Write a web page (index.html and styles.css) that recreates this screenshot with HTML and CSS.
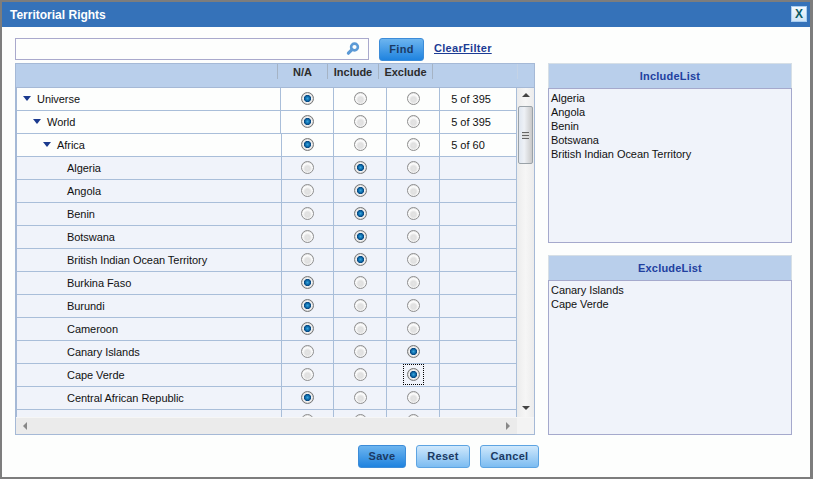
FILE: index.html
```html
<!DOCTYPE html>
<html lang="en">
    <head>
        <meta charset="utf-8" />
        <title>Territorial Rights</title>
        <link rel="stylesheet" href="styles.css">
    </head>
    <body>
        <div class="dialog">
            <div class="titlebar">
                <span class="title">Territorial Rights</span>
                <button class="close">X</button>
            </div>

            <div class="content">
                <div class="left">
                    <div class="search-row">
                        <div class="search-box">
                            <input type="text">
                            <svg width="14" height="14" viewBox="0 0 14 14">
                                <circle cx="8.5" cy="5" r="3.4" fill="none" stroke="#5b9ad6" stroke-width="2.6"/>
                                <path d="M6 7.6 L2.4 11.2" stroke="#5b9ad6" stroke-width="3.2" stroke-linecap="round"/>
                            </svg>
                        </div>
                        <button class="btn btn-dark find">Find</button>
                        <a class="clear" href="#">ClearFilter</a>
                    </div>

                    <div class="grid">
                        <div class="grid-head">
                            <div class="hcell hcell-name"></div>
                            <div class="hcell hcell-na">N/A</div>
                            <div class="hcell hcell-inc">Include</div>
                            <div class="hcell hcell-exc">Exclude</div>
                            <div class="hcell hcell-count"></div>
                        </div>

                        <div class="grid-main">
                            <div class="rows">
                                <div class="row row-open">
                                    <div class="cell name level-0"><i class="caret"></i>Universe</div>
                                    <div class="cell"><input type="radio" name="r0" checked></div>
                                    <div class="cell"><input type="radio" name="r0"></div>
                                    <div class="cell"><input type="radio" name="r0"></div>
                                    <div class="cell count">5 of 395</div>
                                </div>
                                <div class="row row-open">
                                    <div class="cell name level-1"><i class="caret"></i>World</div>
                                    <div class="cell"><input type="radio" name="r1" checked></div>
                                    <div class="cell"><input type="radio" name="r1"></div>
                                    <div class="cell"><input type="radio" name="r1"></div>
                                    <div class="cell count">5 of 395</div>
                                </div>
                                <div class="row row-open">
                                    <div class="cell name level-2"><i class="caret"></i>Africa</div>
                                    <div class="cell"><input type="radio" name="r2" checked></div>
                                    <div class="cell"><input type="radio" name="r2"></div>
                                    <div class="cell"><input type="radio" name="r2"></div>
                                    <div class="cell count">5 of 60</div>
                                </div>
                                <div class="row">
                                    <div class="cell name leaf">Algeria</div>
                                    <div class="cell"><input type="radio" name="r3"></div>
                                    <div class="cell"><input type="radio" name="r3" checked></div>
                                    <div class="cell"><input type="radio" name="r3"></div>
                                    <div class="cell count"></div>
                                </div>
                                <div class="row">
                                    <div class="cell name leaf">Angola</div>
                                    <div class="cell"><input type="radio" name="r4"></div>
                                    <div class="cell"><input type="radio" name="r4" checked></div>
                                    <div class="cell"><input type="radio" name="r4"></div>
                                    <div class="cell count"></div>
                                </div>
                                <div class="row">
                                    <div class="cell name leaf">Benin</div>
                                    <div class="cell"><input type="radio" name="r5"></div>
                                    <div class="cell"><input type="radio" name="r5" checked></div>
                                    <div class="cell"><input type="radio" name="r5"></div>
                                    <div class="cell count"></div>
                                </div>
                                <div class="row">
                                    <div class="cell name leaf">Botswana</div>
                                    <div class="cell"><input type="radio" name="r6"></div>
                                    <div class="cell"><input type="radio" name="r6" checked></div>
                                    <div class="cell"><input type="radio" name="r6"></div>
                                    <div class="cell count"></div>
                                </div>
                                <div class="row">
                                    <div class="cell name leaf">British Indian Ocean Territory</div>
                                    <div class="cell"><input type="radio" name="r7"></div>
                                    <div class="cell"><input type="radio" name="r7" checked></div>
                                    <div class="cell"><input type="radio" name="r7"></div>
                                    <div class="cell count"></div>
                                </div>
                                <div class="row">
                                    <div class="cell name leaf">Burkina Faso</div>
                                    <div class="cell"><input type="radio" name="r8" checked></div>
                                    <div class="cell"><input type="radio" name="r8"></div>
                                    <div class="cell"><input type="radio" name="r8"></div>
                                    <div class="cell count"></div>
                                </div>
                                <div class="row">
                                    <div class="cell name leaf">Burundi</div>
                                    <div class="cell"><input type="radio" name="r9" checked></div>
                                    <div class="cell"><input type="radio" name="r9"></div>
                                    <div class="cell"><input type="radio" name="r9"></div>
                                    <div class="cell count"></div>
                                </div>
                                <div class="row">
                                    <div class="cell name leaf">Cameroon</div>
                                    <div class="cell"><input type="radio" name="r10" checked></div>
                                    <div class="cell"><input type="radio" name="r10"></div>
                                    <div class="cell"><input type="radio" name="r10"></div>
                                    <div class="cell count"></div>
                                </div>
                                <div class="row">
                                    <div class="cell name leaf">Canary Islands</div>
                                    <div class="cell"><input type="radio" name="r11"></div>
                                    <div class="cell"><input type="radio" name="r11"></div>
                                    <div class="cell"><input type="radio" name="r11" checked></div>
                                    <div class="cell count"></div>
                                </div>
                                <div class="row">
                                    <div class="cell name leaf">Cape Verde</div>
                                    <div class="cell"><input type="radio" name="r12"></div>
                                    <div class="cell"><input type="radio" name="r12"></div>
                                    <div class="cell"><span class="focus-ring"><input type="radio" name="r12" checked></span></div>
                                    <div class="cell count"></div>
                                </div>
                                <div class="row">
                                    <div class="cell name leaf">Central African Republic</div>
                                    <div class="cell"><input type="radio" name="r13" checked></div>
                                    <div class="cell"><input type="radio" name="r13"></div>
                                    <div class="cell"><input type="radio" name="r13"></div>
                                    <div class="cell count"></div>
                                </div>
                                <div class="row">
                                    <div class="cell name leaf"></div>
                                    <div class="cell"><input type="radio" name="r14"></div>
                                    <div class="cell"><input type="radio" name="r14"></div>
                                    <div class="cell"><input type="radio" name="r14"></div>
                                    <div class="cell count"></div>
                                </div>
                            </div>

                            <div class="vscroll">
                                <i class="arrow-up"></i>
                                <div class="thumb"><i class="grip"></i></div>
                                <i class="arrow-down"></i>
                            </div>
                        </div>

                        <div class="hscroll">
                            <div class="hscroll-track">
                                <i class="arrow-left"></i>
                                <i class="arrow-right"></i>
                            </div>
                            <div class="hscroll-corner"></div>
                        </div>
                    </div>
                </div>

                <div class="right">
                    <div class="panel">
                        <div class="panel-head">IncludeList</div>
                        <div class="panel-body">
                            <div>Algeria</div>
                            <div>Angola</div>
                            <div>Benin</div>
                            <div>Botswana</div>
                            <div>British Indian Ocean Territory</div>
                        </div>
                    </div>
                    <div class="panel">
                        <div class="panel-head">ExcludeList</div>
                        <div class="panel-body">
                            <div>Canary Islands</div>
                            <div>Cape Verde</div>
                        </div>
                    </div>
                </div>
            </div>

            <div class="actions">
                <button class="btn btn-dark save">Save</button>
                <button class="btn reset">Reset</button>
                <button class="btn cancel">Cancel</button>
            </div>
        </div>
    </body>
</html>
```
FILE: styles.css
```css
body, html {
    margin: 0;
    padding: 0;
    height: 100%;
    overflow: hidden;
    font-family: "Liberation Sans", Arial, sans-serif;
    font-size: 11px;
    background: #7d7d7d;
}

.dialog {
    margin: 2px 3px 2px 2px;
    height: 475px;
    background: #fdfefd;
    display: flex;
    flex-direction: column;
}

.titlebar {
    height: 25px;
    flex: none;
    background: #3572b9;
    display: flex;
    align-items: center;
    justify-content: space-between;
    padding: 0 3px 0 8px;
}

.title {
    color: #fff;
    font-size: 12px;
    font-weight: bold;
}

.close {
    width: 16px;
    height: 16px;
    padding: 0;
    margin-bottom: 1px;
    border: 1px solid #a8cdf0;
    background: linear-gradient(#f4f9fd, #cfe4f6);
    color: #0b5a63;
    font-family: inherit;
    font-size: 12px;
    font-weight: bold;
}

.content {
    display: flex;
    gap: 13px;
    padding: 11px 0 0 13px;
}

.left {
    width: 520px;
}

.search-row {
    height: 25px;
    display: flex;
    align-items: flex-start;
}

.search-box {
    width: 354px;
    height: 22px;
    box-sizing: border-box;
    border: 1px solid #a9a9cc;
    background: #fdfefd;
    display: flex;
    align-items: center;
    padding-right: 8px;
}

.search-box input {
    flex: 1;
    border: none;
    outline: none;
    background: none;
}

.btn {
    height: 23px;
    padding: 0 0 2px 0;
    border: 1px solid #5da4e2;
    border-radius: 3px;
    background: linear-gradient(#cfe8fc, #7cbcf1);
    color: #1b3a63;
    font-family: inherit;
    font-size: 11px;
    font-weight: bold;
    letter-spacing: 0.3px;
}

.btn-dark {
    border-color: #3c8cd8;
    background: linear-gradient(#6db5ef, #1f83df);
}

.find {
    width: 45px;
    margin-left: 10px;
}

.clear {
    margin-left: 10px;
    margin-top: 4px;
    color: #1c3c94;
    font-size: 11px;
    font-weight: bold;
    letter-spacing: 0.3px;
}

.grid {
    height: 372px;
    box-sizing: border-box;
    border: 1px solid #a5b9d6;
    background: #edf0f3;
}

.grid-head {
    height: 24px;
    background: #b9cfeb;
    display: flex;
    box-sizing: border-box;
    border-bottom: 1px solid #a5b9d6;
}

.hcell {
    height: 15px;
    box-sizing: border-box;
    border-right: 1px solid #a5b3c4;
    text-align: center;
    font-weight: bold;
    color: #2c2c2c;
    line-height: 16px;
}

.hcell-name { width: 262px; }
.hcell-na { width: 50px; }
.hcell-inc { width: 51px; }
.hcell-exc { width: 54px; }
.hcell-count {
    width: 85px;
    border-right: 1px solid #c4d3e6;
}

.grid-main {
    height: 329px;
    display: flex;
}

.rows {
    width: 502px;
    box-sizing: border-box;
    border-left: 1px solid #a5b9d6;
    overflow: hidden;
}

.row {
    height: 23px;
    box-sizing: border-box;
    display: flex;
    border-bottom: 1px solid #a9bed9;
    background: #f0f3fa;
}

.row-open {
    background: #fdfefd;
}

.cell {
    width: 53px;
    box-sizing: border-box;
    border-right: 1px solid #a9bed9;
    display: flex;
    align-items: center;
    justify-content: center;
    color: #111;
}

.cell.name {
    width: 265px;
    justify-content: flex-start;
    letter-spacing: -0.05px;
}

.cell.count {
    width: 77px;
    justify-content: flex-start;
    padding-left: 11px;
}

.level-0 { padding-left: 6px; }
.level-1 { padding-left: 16px; }
.level-2 { padding-left: 26px; }
.leaf { padding-left: 50px; }

.caret {
    width: 0;
    height: 0;
    margin-right: 6px;
    margin-bottom: 2px;
    border-style: solid;
    border-width: 5px 4.5px 0 4.5px;
    border-color: #1b3a8e transparent transparent transparent;
}

input[type="radio"] {
    appearance: none;
    width: 13px;
    height: 13px;
    margin: -2px 0 0 0;
    border: 1px solid #8e8e8e;
    border-radius: 50%;
    background: radial-gradient(circle at 50% 60%, #e4e4e4 0, #e0e0e0 2.5px, #f2f2f2 4px, #fff 5px, #e6e6e6 6px);
}

input[type="radio"]:checked {
    border-color: #777;
    background: radial-gradient(circle at 50% 50%, #3aa6de 0, #0f6fae 2px, #06457e 3.3px, #f4f4f4 3.9px, #e2e2e2 5px, #c4c4c4 6px);
}

.focus-ring {
    display: flex;
    padding: 3px;
    outline: 1px dotted #000;
    outline-offset: 0;
    margin-top: -2px;
}

.focus-ring input[type="radio"] {
    margin: 0;
}

.vscroll {
    width: 17px;
    position: relative;
    background: linear-gradient(to right, #ececec, #f6f6f6 50%, #ececec);
}

.thumb {
    position: absolute;
    top: 18px;
    left: 1px;
    width: 15px;
    height: 58px;
    box-sizing: border-box;
    border: 1px solid #9aa2a8;
    border-radius: 2px;
    background: linear-gradient(to right, #dfe6f0, #eef1f6 40%, #c9c9c9);
    display: flex;
    align-items: center;
    justify-content: center;
}

.grip {
    width: 7px;
    height: 7px;
    background: repeating-linear-gradient(#666 0, #666 1px, #ddd 1px, #ddd 3px);
}

.arrow-up, .arrow-down {
    position: absolute;
    left: 5px;
    width: 0;
    height: 0;
    border-style: solid;
}

.arrow-up {
    top: 5px;
    border-width: 0 4px 4px 4px;
    border-color: transparent transparent #444 transparent;
}

.arrow-down {
    bottom: 7px;
    border-width: 4px 4px 0 4px;
    border-color: #444 transparent transparent transparent;
}

.hscroll {
    height: 17px;
    display: flex;
    border-top: 1px solid #f6f6f6;
    box-sizing: border-box;
}

.hscroll-track {
    flex: 1;
    background: #ebebeb;
    display: flex;
    align-items: center;
    justify-content: space-between;
    padding: 0 7px 0 7px;
}

.hscroll-corner {
    width: 17px;
    background: #f3f3f3;
}

.arrow-left, .arrow-right {
    width: 0;
    height: 0;
    border-style: solid;
}

.arrow-left {
    border-width: 4px 4px 4px 0;
    border-color: transparent #888 transparent transparent;
}

.arrow-right {
    border-width: 4px 0 4px 4px;
    border-color: transparent transparent transparent #888;
}

.right {
    width: 244px;
    margin-top: 25px;
    display: flex;
    flex-direction: column;
    gap: 12px;
}

.panel {
    height: 180px;
    display: flex;
    flex-direction: column;
}

.panel-head {
    height: 25px;
    box-sizing: border-box;
    background: #b9cfeb;
    border: 1px solid #d6dfe6;
    border-bottom: none;
    text-align: center;
    line-height: 24px;
    font-weight: bold;
    color: #21409f;
    letter-spacing: 0.2px;
}

.panel-body {
    flex: 1;
    box-sizing: border-box;
    border: 1px solid #a5a9cc;
    background: #f0f3fa;
    padding: 2px 2px;
    line-height: 14px;
    color: #111;
    letter-spacing: -0.05px;
}

.actions {
    display: flex;
    justify-content: flex-start;
    gap: 10px;
    padding: 10px 0 0 356px;
}

.save { width: 48px; }
.reset { width: 54px; }
.cancel { width: 59px; }
```
